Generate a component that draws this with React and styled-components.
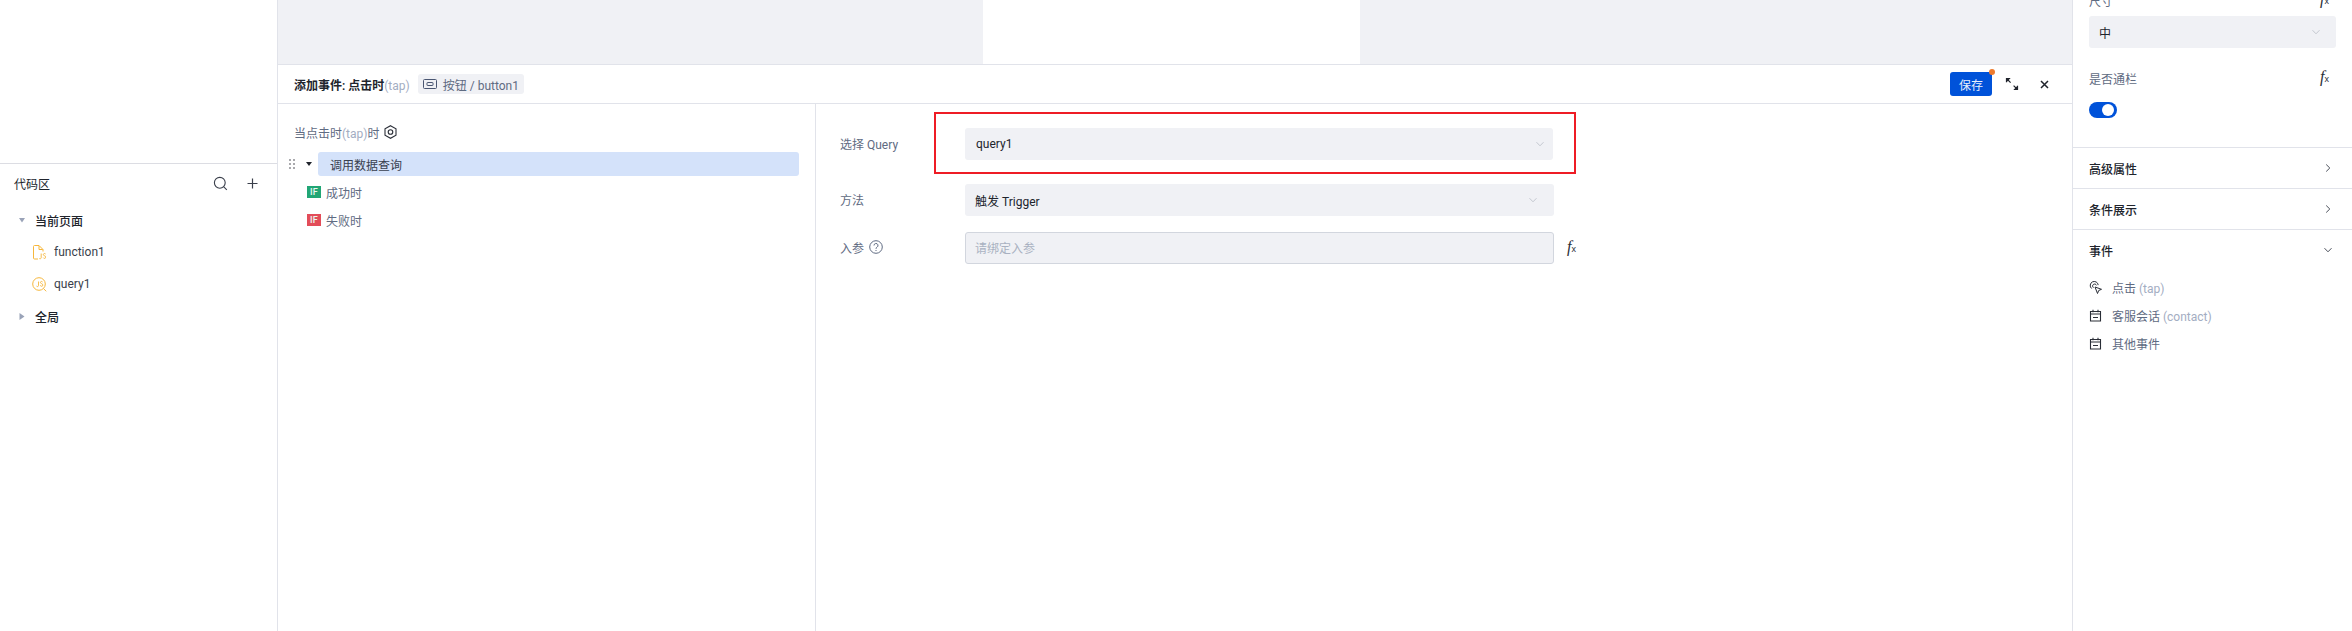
import React from "react";
import styled, { createGlobalStyle } from "styled-components";

const FONT = `Roboto, "Noto Sans CJK SC", sans-serif`;
const LINE = "#e1e3ea";
const FILL = "#f0f1f5";
const MUTED = "#5f6b82";
const FAINT = "#a3adc2";
const INK = "#20242c";

const Global = createGlobalStyle`
  html, body { margin: 0; padding: 0; background: #fff; overflow: hidden; }
  body { font-family: ${FONT}; font-size: 12px; color: ${INK}; }
`;

const Page = styled.div`
  display: flex;
  width: 2352px;
  height: 631px;
  overflow: hidden;
`;

const LeftPanel = styled.aside`
  width: 277px;
  flex: none;
  border-right: 1px solid ${LINE};
`;
const LeftBlank = styled.div`
  height: 163px;
  border-bottom: 1px solid #dcdde3;
`;
const CodeHeader = styled.div`
  height: 40px;
  box-sizing: border-box;
  display: flex;
  align-items: center;
  padding: 0 17px 2px 14px;
  gap: 16px;
`;
const CodeTitle = styled.span`
  flex: 1;
  color: ${INK};
`;
const IconButton = styled.span`
  display: inline-flex;
  align-items: center;
  justify-content: center;
  width: ${(p) => p.$w || 16}px;
  height: 16px;
  margin-left: ${(p) => p.$ml || 0}px;
  color: #3a3f4b;
`;
const TreeGroup = styled.div`
  height: 32px;
  display: flex;
  align-items: center;
  padding-left: 19px;
  gap: 10px;
  font-weight: 500;
  color: ${INK};
`;
const TreeItem = styled.div`
  height: 32px;
  display: flex;
  align-items: center;
  padding-left: 32px;
  gap: 7px;
  color: #3a3f4b;
  font-size: 12px;
`;
const TreeIconSlot = styled.span`
  width: 15px;
  display: flex;
  justify-content: center;
`;

const Center = styled.main`
  flex: 1;
  display: flex;
  flex-direction: column;
  min-width: 0;
`;
const CanvasBand = styled.div`
  height: 64px;
  flex: none;
  display: flex;
  background: ${FILL};
  border-bottom: 1px solid ${LINE};
`;
const CanvasPhone = styled.div`
  width: 377px;
  margin-left: 705px;
  background: #fff;
`;
const Toolbar = styled.div`
  height: 38px;
  flex: none;
  display: flex;
  align-items: center;
  padding: 0 16px;
  border-bottom: 1px solid ${LINE};
`;
const ToolbarTitle = styled.span`
  font-weight: 600;
  color: ${INK};
`;
const Hint = styled.span`
  color: ${FAINT};
  font-weight: 400;
`;
const TargetChip = styled.span`
  display: inline-flex;
  align-items: center;
  gap: 6px;
  height: 20px;
  margin-left: 8px;
  padding: 0 5px;
  border-radius: 3px;
  background: ${FILL};
  color: ${MUTED};
`;
const ToolbarActions = styled.div`
  margin-left: auto;
  display: flex;
  align-items: center;
  margin-right: 6px;
`;
const SaveButton = styled.button`
  position: relative;
  width: 42px;
  height: 24px;
  padding: 0;
  border: 0;
  border-radius: 3px;
  background: #0052d9;
  color: #e8eefb;
  font: 12px ${FONT};
  margin-right: 13px;
`;
const Dot = styled.span`
  position: absolute;
  top: -3px;
  right: -3px;
  width: 6px;
  height: 6px;
  border-radius: 50%;
  background: #ed7b2f;
`;
const Body = styled.div`
  flex: 1;
  display: flex;
  min-height: 0;
`;
const EventPane = styled.section`
  flex: none;
  border-right: 1px solid ${LINE};
  padding: 16px 16px 0 11px;
  width: 510px;
`;
const EventHead = styled.div`
  height: 24px;
  display: flex;
  align-items: center;
  padding-left: 5px;
  gap: 4px;
  color: ${MUTED};
  margin-bottom: 8px;
`;
const ActionRow = styled.div`
  display: flex;
  align-items: center;
  height: 24px;
`;
const DragHandle = styled.span`
  display: grid;
  grid-template-columns: 2px 2px;
  gap: 2px 2px;
  width: 6px;
  margin-right: 11px;
  i { width: 2px; height: 2px; background: #a9a9ad; }
`;
const Caret = styled.span`
  width: 0;
  height: 0;
  border-left: 3.5px solid transparent;
  border-right: 3.5px solid transparent;
  border-top: 4px solid #20242c;
  margin-right: 6px;
`;
const ActionLabel = styled.div`
  flex: 1;
  height: 24px;
  display: flex;
  align-items: center;
  padding-left: 12px;
  background: #d4e2fa;
  border-radius: 3px;
  color: #39404f;
`;
const BranchList = styled.div`
  padding-top: 2px;
`;
const BranchRow = styled.div`
  display: flex;
  align-items: center;
  height: 28px;
  padding-left: 18px;
  gap: 5px;
  color: ${MUTED};
`;
const IfBadge = styled.span`
  width: 14px;
  height: 12px;
  display: flex;
  align-items: center;
  justify-content: center;
  background: ${(p) => p.$bg};
  color: #eaf6f1;
  font-size: 9px;
  font-weight: 500;
  letter-spacing: 0.2px;
`;
const ConfigPane = styled.section`
  position: relative;
  flex: 1;
  padding: 24px 0 0 24px;
`;
const FormRow = styled.div`
  display: flex;
  align-items: center;
  margin-bottom: ${(p) => p.$mb ?? 24}px;
`;
const FormLabel = styled.label`
  width: 125px;
  flex: none;
  display: flex;
  align-items: center;
  gap: 5px;
  padding-bottom: 2px;
  color: ${MUTED};
`;
const SelectBox = styled.div`
  width: ${(p) => p.$w || 589}px;
  height: 32px;
  box-sizing: border-box;
  display: flex;
  align-items: center;
  justify-content: space-between;
  padding: 0 ${(p) => p.$right || 8}px 0 ${(p) => p.$left || 10}px;
  background: ${FILL};
  border-radius: 3px;
  color: ${INK};
`;
const InputBox = styled.div`
  width: 589px;
  height: 32px;
  box-sizing: border-box;
  display: flex;
  align-items: center;
  padding: 0 9px 1px;
  background: ${FILL};
  border: 1px solid #d2d6de;
  border-radius: 3px;
  color: #a9b1c1;
`;
const Fx = styled.span`
  font-family: "Liberation Serif", serif;
  font-style: italic;
  font-size: 16px;
  line-height: 14px;
  color: #2a2e37;
  margin-left: ${(p) => p.$ml || 0}px;
  small { font-style: normal; font-size: 9px; font-family: "Liberation Sans", sans-serif; }
`;
const Highlight = styled.div`
  position: absolute;
  left: 118px;
  top: 8px;
  width: 642px;
  height: 62px;
  box-sizing: border-box;
  border: 2px solid #ee1c25;
  pointer-events: none;
`;

const RightPanel = styled.aside`
  width: 279px;
  flex: none;
  border-left: 1px solid ${LINE};
`;
const PropBlock = styled.div`
  display: flex;
  flex-direction: column;
  padding: 0 16px;
  height: 147px;
  border-bottom: 1px solid ${LINE};
`;
const PropHead = styled.div`
  display: flex;
  flex: none;
  align-items: center;
  justify-content: space-between;
  color: ${MUTED};
  height: 16px;
  margin-top: ${(p) => p.$mt || 0}px;
  padding-right: 7px;
`;
const PropSelect = styled(SelectBox)`
  flex: none;
  width: 100%;
  margin-top: 8px;
  padding-right: 15px;
`;
const Toggle = styled.span`
  display: block;
  flex: none;
  position: relative;
  width: 28px;
  height: 16px;
  margin-top: 16px;
  border-radius: 8px;
  background: #0052d9;
  &::after {
    content: "";
    position: absolute;
    right: 3px;
    top: 2px;
    width: 12px;
    height: 12px;
    border-radius: 50%;
    background: #fff;
  }
`;
const Section = styled.div`
  height: 40px;
  box-sizing: content-box;
  display: flex;
  align-items: center;
  justify-content: space-between;
  padding: 0 19px 0 16px;
  font-weight: 500;
  color: ${INK};
  border-bottom: ${(p) => (p.$open ? "0" : `1px solid ${LINE}`)};
`;
const EventList = styled.div`
  padding: 4px 16px 0;
`;
const EventItem = styled.div`
  height: 27.75px;
  display: flex;
  align-items: center;
  gap: 10px;
  color: ${MUTED};
`;

const Chevron = ({ dir = "down", color = "#c4c8d0", size = 10 }) => (
  <svg width={size} height={size} viewBox="0 0 10 10" fill="none" stroke={color} strokeWidth="1">
    {dir === "down" ? <path d="M1.5 3.2 5 6.8l3.5-3.6" /> : <path d="M3.2 1.5 6.8 5 3.2 8.5" />}
  </svg>
);
const Cal = () => (
  <svg width="13" height="13" viewBox="0 0 13 13" fill="none" stroke="#2a2e37" strokeWidth="1.1">
    <path d="M1.5 2.5h10v9.5h-10z" />
    <path d="M1.5 5h10M4 .8v2.4M9 .8v2.4M4 8.5h5" />
  </svg>
);
const JsFile = () => (
  <svg width="13" height="15" viewBox="0 0 13 15" fill="none" stroke="#f6b73c" strokeWidth="1">
    <path d="M5 14H1.5a1 1 0 0 1-1-1V1.5a1 1 0 0 1 1-1H6l4 4v2" />
    <path d="M6 .8v3.7h3.8" />
    <path d="M8.2 8.5v4.3a1.1 1.1 0 0 1-2 .5M12.6 9a1.3 1.3 0 0 0-2.3.5c0 1.6 2.5 1 2.5 2.6a1.3 1.3 0 0 1-2.5.5" strokeWidth=".9" />
  </svg>
);
const JsQuery = () => (
  <svg width="15" height="15" viewBox="0 0 15 15" fill="none" stroke="#f6b73c" strokeWidth="1">
    <circle cx="7" cy="7" r="6.3" />
    <path d="m11.5 11.5 2.7 2.8" />
    <path d="M6.5 4.5v4.2a1.1 1.1 0 0 1-2 .4M10.6 5a1.2 1.2 0 0 0-2.2.4c0 1.5 2.4 1 2.4 2.5a1.2 1.2 0 0 1-2.4.4" strokeWidth=".9" />
  </svg>
);

const Drag = () => (
  <DragHandle>
    <i /><i /><i /><i /><i /><i />
  </DragHandle>
);

export default function App() {
  return (
    <Page>
      <Global />
      <LeftPanel>
        <LeftBlank />
        <CodeHeader>
          <CodeTitle>代码区</CodeTitle>
          <IconButton>
            <svg width="15" height="15" viewBox="0 0 15 15" fill="none" stroke="#3a3f4b" strokeWidth="1.1">
              <circle cx="6.8" cy="6.8" r="5.4" />
              <path d="m10.8 10.8 3 3" />
            </svg>
          </IconButton>
          <IconButton $w={16}>
            <svg width="11" height="11" viewBox="0 0 11 11" stroke="#3a3f4b" strokeWidth="1.2">
              <path d="M5.5.5v10M.5 5.5h10" />
            </svg>
          </IconButton>
        </CodeHeader>
        <TreeGroup>
          <svg width="6" height="5" viewBox="0 0 6 5"><path d="M0 0h6L3 4.5z" fill="#9aa3b8" /></svg>
          当前页面
        </TreeGroup>
        <TreeItem><TreeIconSlot><JsFile /></TreeIconSlot><span>function1</span></TreeItem>
        <TreeItem><TreeIconSlot><JsQuery /></TreeIconSlot><span>query1</span></TreeItem>
        <TreeGroup>
          <svg width="6" height="7" viewBox="0 0 5 7"><path d="M0 0v7l5-3.5z" fill="#9aa3b8" /></svg>
          全局
        </TreeGroup>
      </LeftPanel>

      <Center>
        <CanvasBand><CanvasPhone /></CanvasBand>
        <Toolbar>
          <ToolbarTitle>添加事件: 点击时<Hint>(tap)</Hint></ToolbarTitle>
          <TargetChip>
            <svg width="14" height="10" viewBox="0 0 14 10" fill="none" stroke="#4a5672" strokeWidth="1">
              <rect x=".5" y=".5" width="13" height="9" rx="1" />
              <rect x="4" y="3.5" width="6" height="3" rx=".5" />
            </svg>
            按钮 / button1
          </TargetChip>
          <ToolbarActions>
            <SaveButton>保存<Dot /></SaveButton>
            <IconButton $w={14}>
              <svg width="14" height="14" viewBox="0 0 14 14" fill="none" stroke="#20242c" strokeWidth="1.2">
                <path d="M2 2l3.6 3.6M8.6 8.6 12 12" />
                <path d="M1.5 5.2V1.5h3.7M12.5 8.8v3.7H8.8" fill="#20242c" />
              </svg>
            </IconButton>
            <IconButton $w={12} $ml={19}>
              <svg width="9" height="9" viewBox="0 0 9 9" stroke="#20242c" strokeWidth="1.5">
                <path d="m1 1 7 7M8 1 1 8" />
              </svg>
            </IconButton>
          </ToolbarActions>
        </Toolbar>
        <Body>
          <EventPane>
            <EventHead>
              <span>当点击时<Hint>(tap)</Hint>时</span>
              <svg width="13" height="14" viewBox="0 0 13 14" fill="none" stroke="#2a2e37" strokeWidth="1.1">
                <path d="M6.5.7 12 3.8v6.4l-5.5 3.1L1 10.2V3.8z" />
                <circle cx="6.5" cy="7" r="2.3" />
              </svg>
            </EventHead>
            <ActionRow>
              <Drag />
              <Caret />
              <ActionLabel>调用数据查询</ActionLabel>
            </ActionRow>
            <BranchList>
              <BranchRow><IfBadge $bg="#21a675">IF</IfBadge>成功时</BranchRow>
              <BranchRow><IfBadge $bg="#e34d59">IF</IfBadge>失败时</BranchRow>
            </BranchList>
          </EventPane>
          <ConfigPane>
            <Highlight />
            <FormRow>
              <FormLabel>选择 Query</FormLabel>
              <SelectBox $w={588} $right={8} $left={11}><span>query1</span><Chevron /></SelectBox>
            </FormRow>
            <FormRow $mb={16}>
              <FormLabel>方法</FormLabel>
              <SelectBox $left={10} $right={16}><span>触发 Trigger</span><Chevron /></SelectBox>
            </FormRow>
            <FormRow>
              <FormLabel>
                入参
                <svg width="14" height="14" viewBox="0 0 14 14" fill="none" stroke="#5f6b82" strokeWidth="1">
                  <circle cx="7" cy="7" r="6.3" />
                  <path d="M5 5.5a2 2 0 1 1 3 1.7c-.7.4-1 .8-1 1.6" />
                  <path d="M7 10v1" />
                </svg>
              </FormLabel>
              <InputBox>请绑定入参</InputBox>
              <Fx $ml={13}>f<small>x</small></Fx>
            </FormRow>
          </ConfigPane>
        </Body>
      </Center>

      <RightPanel>
        <PropBlock>
          <PropHead $mt={-8}><span>尺寸</span><Fx>f<small>x</small></Fx></PropHead>
          <PropSelect><span>中</span><Chevron /></PropSelect>
          <PropHead $mt={22}><span>是否通栏</span><Fx>f<small>x</small></Fx></PropHead>
          <Toggle />
        </PropBlock>
        <Section>高级属性<Chevron dir="right" color="#4a4f5a" /></Section>
        <Section>条件展示<Chevron dir="right" color="#4a4f5a" /></Section>
        <Section $open>事件<Chevron color="#4a4f5a" /></Section>
        <EventList>
          <EventItem>
            <svg width="13" height="14" viewBox="0 0 13 14" fill="none" stroke="#2a2e37" strokeWidth="1">
              <path d="M2.6 7.5a4 4 0 1 1 6.6-3.4M4.5 6.7a2 2 0 1 1 3-2.3" />
              <path d="m6 6 6.5 2.3-2.8 1.2-1.2 3z" />
            </svg>
            <span>点击 <Hint>(tap)</Hint></span>
          </EventItem>
          <EventItem><Cal /><span>客服会话 <Hint>(contact)</Hint></span></EventItem>
          <EventItem><Cal /><span>其他事件</span></EventItem>
        </EventList>
      </RightPanel>
    </Page>
  );
}
